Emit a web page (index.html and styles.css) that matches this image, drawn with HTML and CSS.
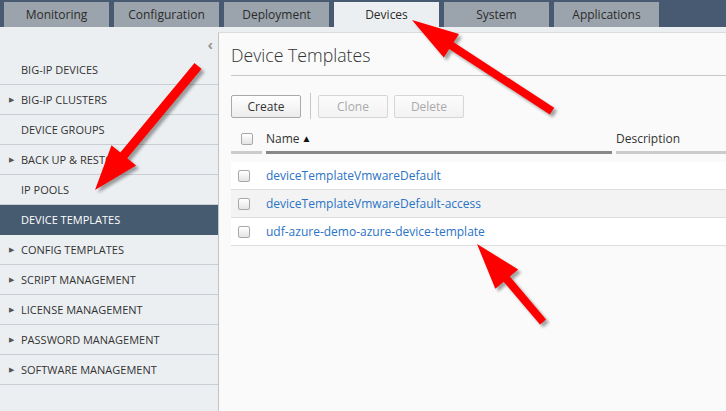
FILE: index.html
```html
<!DOCTYPE html>
<html>
<head>
<meta charset="utf-8">
<link rel="stylesheet" href="styles.css">
</head>
<body>
<div class="page">
  <nav class="topbar">
    <div class="tab">Monitoring</div>
    <div class="tab">Configuration</div>
    <div class="tab">Deployment</div>
    <div class="tab active">Devices</div>
    <div class="tab">System</div>
    <div class="tab">Applications</div>
  </nav>
  <div class="main">
    <aside class="sidebar">
      <div class="side-head"><span class="collapse">&#8249;</span></div>
      <ul class="menu">
        <li class="item"><span class="caret"></span>BIG-IP DEVICES</li>
        <li class="item"><span class="caret on">&#9654;</span>BIG-IP CLUSTERS</li>
        <li class="item"><span class="caret"></span>DEVICE GROUPS</li>
        <li class="item"><span class="caret on">&#9654;</span>BACK UP &amp; RESTORE</li>
        <li class="item"><span class="caret"></span>IP POOLS</li>
        <li class="item selected"><span class="caret"></span>DEVICE TEMPLATES</li>
        <li class="item"><span class="caret on">&#9654;</span>CONFIG TEMPLATES</li>
        <li class="item"><span class="caret on">&#9654;</span>SCRIPT MANAGEMENT</li>
        <li class="item"><span class="caret on">&#9654;</span>LICENSE MANAGEMENT</li>
        <li class="item"><span class="caret on">&#9654;</span>PASSWORD MANAGEMENT</li>
        <li class="item"><span class="caret on">&#9654;</span>SOFTWARE MANAGEMENT</li>
      </ul>
    </aside>
    <section class="panel">
      <h1 class="title">Device Templates</h1>
      <div class="toolbar">
        <button class="btn">Create</button>
        <span class="divider"></span>
        <button class="btn disabled">Clone</button>
        <button class="btn disabled">Delete</button>
      </div>
      <div class="thead">
        <div class="th th-check"><span class="cb"></span></div>
        <div class="th th-name">Name <span class="sort">&#9650;</span></div>
        <div class="th th-desc">Description</div>
      </div>
      <div class="tbody">
        <div class="row"><span class="cb"></span><a class="link">deviceTemplateVmwareDefault</a></div>
        <div class="row alt"><span class="cb"></span><a class="link">deviceTemplateVmwareDefault-access</a></div>
        <div class="row"><span class="cb"></span><a class="link">udf-azure-demo-azure-device-template</a></div>
      </div>
    </section>
  </div>
  <svg class="arrows" width="726" height="411" viewBox="0 0 726 411">
    <polygon points="412,20 443.8,57.4 449.2,49.0 549.8,114.4 554.2,107.7 453.6,42.3 459.0,33.9"/>
    <polygon points="95,190 136.1,165.6 127.2,158.3 201.5,68.9 194.5,63.1 120.3,152.5 111.5,145.2"/>
    <polygon points="477,244 495.3,288.8 503.7,281.7 540.0,324.6 546.1,319.4 509.8,276.5 518.2,269.4"/>
  </svg>
</div>
</body>
</html>
```
FILE: styles.css
```css
* { box-sizing: border-box; }
html, body { margin: 0; padding: 0; }
body {
  width: 726px;
  height: 411px;
  overflow: hidden;
  font-family: "Open Sans", "Liberation Sans", sans-serif;
  color: #333;
  background: #eceff2;
}
.page { position: relative; width: 726px; height: 411px; display: flex; flex-direction: column; }

.topbar {
  height: 27px;
  background: #475a71;
  display: flex;
  align-items: flex-end;
  gap: 5px;
  padding-left: 4px;
  flex: none;
}
.tab {
  width: 105px;
  height: 25px;
  background: #9ba4ad;
  font-size: 12px;
  line-height: 25px;
  text-align: center;
  color: #2b2b2b;
}
.tab.active { background: #eceff2; height: 25px; }

.main { flex: 1; display: flex; background: #eceff2; min-height: 0; }

.sidebar { width: 218px; flex: none; }
.side-head { height: 28px; display: flex; justify-content: flex-end; padding: 10px 5px 0 0; }
.collapse { color: #999; font-size: 15px; line-height: 14px; font-weight: 700; }
.menu { list-style: none; margin: 0; padding: 0; }
.item {
  height: 30px;
  border-bottom: 1px solid #c9ced4;
  display: flex;
  align-items: center;
  font-size: 11px;
  color: #333;
  padding-left: 9px;
}
.item.selected { background: #465a70; color: #fff; border-bottom-color: #465a70; }
.caret { width: 12px; font-size: 7px; color: #555; line-height: 1; }

.panel {
  flex: 1;
  margin-top: 5px;
  background: #fafafa;
  border-left: 1px solid #c4c4c4;
  border-top: 1px solid #dcdcdc;
  padding-left: 12px;
  min-width: 0;
}
.title {
  margin: 0;
  height: 43px;
  border-bottom: 1px solid #c8c8c8;
  font-size: 17.7px;
  font-weight: 300;
  line-height: 44px;
  color: #333;
}
.toolbar { display: flex; align-items: center; height: 26px; margin-top: 17px; }
.btn {
  height: 23px;
  width: 70px;
  font-family: inherit;
  font-size: 12px;
  color: #333;
  border: 1px solid #a9a9a9;
  border-radius: 2px;
  background: linear-gradient(#ffffff, #ececec);
  padding: 0;
}
.btn.disabled { color: #aaa; border-color: #d6d6d6; background: linear-gradient(#fcfcfc, #f2f2f2); margin-left: 6px; }
.divider { width: 1px; height: 26px; background: #c8c8c8; margin: 0 1px 0 9px; }

.thead { display: flex; gap: 4px; margin-top: 7px; }
.th { height: 28px; border-bottom: 3px solid #cccccc; display: flex; align-items: center; font-size: 12px; }
.th-check { width: 31px; padding-left: 10px; }
.th-name { width: 346px; border-bottom-color: #888; }
.th-desc { flex: 1; }
.sort { font-size: 10px; margin-left: 2px; position: relative; top: -1px; color: #111; }

.cb {
  display: inline-block;
  width: 12px;
  height: 12px;
  border: 1px solid #a8a8a8;
  border-radius: 2px;
  background: linear-gradient(#fff, #e4e4e4);
  flex: none;
}
.tbody { margin-top: 8px; }
.row {
  height: 28px;
  background: #fff;
  border-bottom: 1px solid #dedede;
  display: flex;
  align-items: center;
  padding-left: 7px;
}
.row.alt { background: #f3f3f3; }
.row .cb { margin-right: 16px; }
.link { color: #2a73c5; font-size: 12px; text-decoration: none; }

.arrows {
  position: absolute;
  left: 0;
  top: 0;
  pointer-events: none;
  filter: drop-shadow(3px 3px 1.5px rgba(0,0,0,0.35));
}
.arrows polygon { fill: #ff0000; }
```
